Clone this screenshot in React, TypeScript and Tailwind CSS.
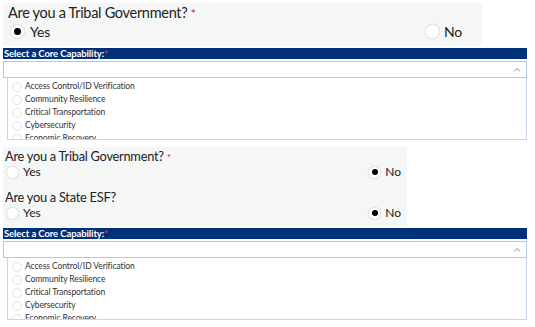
import React from "react";

const items = [
  "Access Control/ID Verification",
  "Community Resilience",
  "Critical Transportation",
  "Cybersecurity",
  "Economic Recovery",
];

function Radio({ checked, size }: { checked: boolean; size: "lg" | "sm" }) {
  const outer = size === "lg" ? "w-[15px] h-[15px]" : "w-[13px] h-[13px]";
  const inner = size === "lg" ? "w-[7px] h-[7px]" : "w-[6px] h-[6px]";
  return (
    <span
      className={`${outer} rounded-full bg-white border border-[#e4e6e8] shadow-[0_0_1px_rgba(0,0,0,0.15)] flex items-center justify-center shrink-0`}
    >
      {checked && <span className={`${inner} rounded-full bg-black`} />}
    </span>
  );
}

function Capability() {
  return (
    <div className="flex flex-col">
      <div className="h-[11px] w-[524px] bg-[#003078] text-white font-bold text-[9.5px] leading-[11px] pl-[1px] tracking-[-0.1px] whitespace-nowrap">
        Select a Core Capability:<span className="text-[#e0302f]">*</span>
      </div>
      <div className="mt-[2px] h-[17px] w-[524px] border border-[#b3c6e6] bg-white flex items-center justify-end pr-[5px]">
        <svg width="8" height="6" viewBox="0 0 8 6">
          <path d="M1 4.5 L4 1.5 L7 4.5" fill="none" stroke="#8a8a8a" strokeWidth="1" />
        </svg>
      </div>
      <div className="ml-[4px] w-[520px] h-[62px] border border-[#c9d5ea] border-t-0 bg-white overflow-hidden pt-[2px]">
        {items.map((t) => (
          <div key={t} className="h-[13px] flex items-center">
            <span className="ml-[4px] w-[10px] h-[10px] rounded-full border border-[#e3e3e3] bg-white shrink-0" />
            <span className="ml-[3px] text-[8.5px] text-[#333] leading-[13px] whitespace-nowrap tracking-[-0.1px]">{t}</span>
          </div>
        ))}
      </div>
    </div>
  );
}

export default function App() {
  return (
    <div
      className="w-[535px] h-[327px] bg-white overflow-hidden relative"
      style={{ fontFamily: "Lato, 'Open Sans', sans-serif" }}
    >
      <div className="pt-[3px] pl-[3px] flex flex-col">
        {/* Section 1 */}
        <div className="w-[479px] h-[43px] bg-[#f5f6f6] flex flex-col">
          <div className="h-[20px] leading-[20px] text-[14.5px] tracking-[-0.3px] text-[#222] pl-[5px] whitespace-nowrap">
            Are you a Tribal Government?{" "}
            <span className="text-[#c8202a] text-[12px]">*</span>
          </div>
          <div className="h-[16px] flex items-center pl-[7px]">
            <Radio checked size="lg" />
            <span className="ml-[5px] text-[14px] tracking-[-0.2px] text-[#222]">Yes</span>
            <div className="ml-auto mr-[20px] flex items-center">
              <Radio checked={false} size="lg" />
              <span className="ml-[4px] text-[14px] tracking-[-0.2px] text-[#222]">No</span>
            </div>
          </div>
        </div>
        <div className="mt-[2px]">
          <Capability />
        </div>

        {/* Section 2 */}
        <div className="mt-[7px] w-[404px] h-[80px] bg-[#f5f6f6] flex flex-col">
          <div className="h-[18px] leading-[18px] text-[12.8px] tracking-[-0.25px] text-[#222] pl-[2px] whitespace-nowrap">
            Are you a Tribal Government?{" "}
            <span className="text-[#c8202a] text-[10px]">*</span>
          </div>
          <div className="h-[14px] flex items-center pl-[3px]">
            <Radio checked={false} size="sm" />
            <span className="ml-[4px] text-[12px] text-[#222]">Yes</span>
            <div className="ml-auto mr-[6px] flex items-center">
              <Radio checked size="sm" />
              <span className="ml-[4px] text-[12px] text-[#222]">No</span>
            </div>
          </div>
          <div className="mt-[9px] h-[18px] leading-[18px] text-[12.8px] tracking-[-0.25px] text-[#222] pl-[2px] whitespace-nowrap">
            Are you a State ESF?
          </div>
          <div className="h-[14px] flex items-center pl-[3px]">
            <Radio checked={false} size="sm" />
            <span className="ml-[4px] text-[12px] text-[#222]">Yes</span>
            <div className="ml-auto mr-[6px] flex items-center">
              <Radio checked size="sm" />
              <span className="ml-[4px] text-[12px] text-[#222]">No</span>
            </div>
          </div>
        </div>
        <div className="mt-[1px]">
          <Capability />
        </div>
      </div>
    </div>
  );
}
